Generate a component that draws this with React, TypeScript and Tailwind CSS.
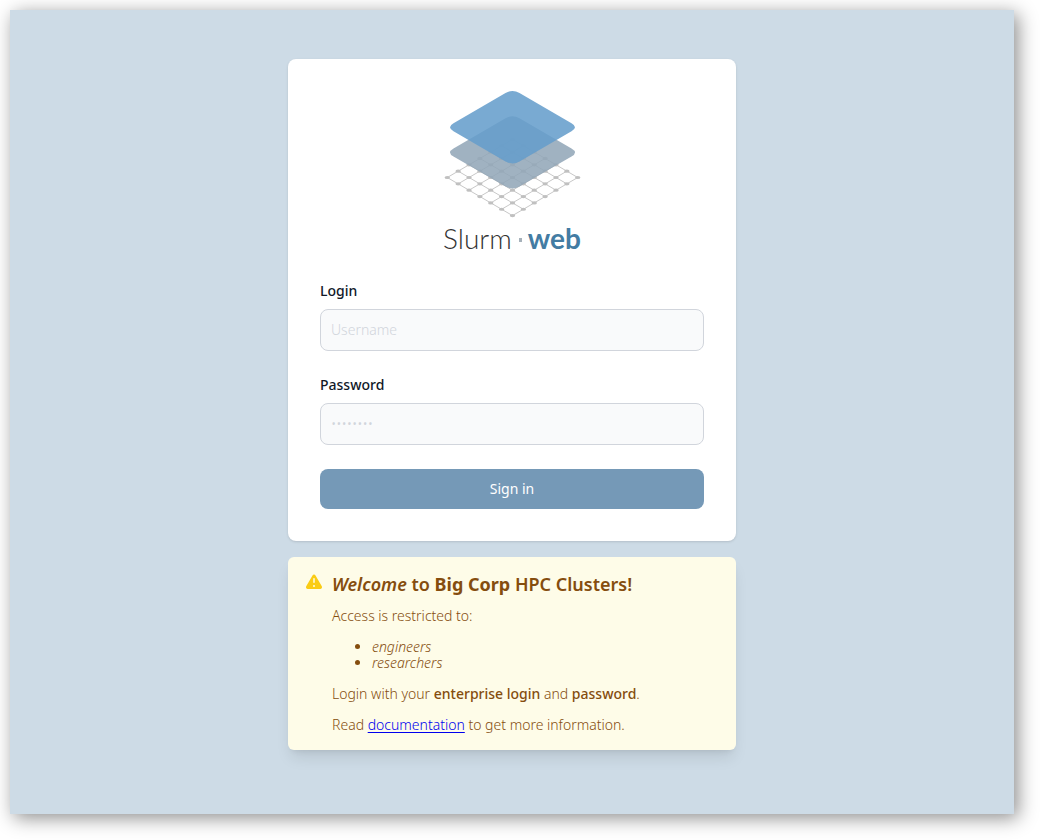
const STEPS = [0, 1, 2, 3, 4, 5, 6];

function nodeAt(column: number, row: number) {
  return {
    x: 68.5 + (column - row) * 10.87,
    y: 48.400 + (column + row) * 6.35,
  };
}

const SHEET =
  "M61.5 2Q68.500 -2 75.500 2L127.500 32.200Q134.500 36.200 127.500 40.200L75.500 70.400Q68.500 74.400 61.500 70.400L9.500 40.200Q2.500 36.200 9.500 32.200Z";

function Logo() {
  return (
    <div className="flex h-[166px] flex-col items-center">
      <svg viewBox="0 0 137 127" className="h-[127px] w-[137px] shrink-0" aria-hidden="true">
        {STEPS.map((step) => {
          const a = nodeAt(step, 0);
          const b = nodeAt(step, 6);
          const c = nodeAt(0, step);
          const d = nodeAt(6, step);
          return (
            <path
              key={step}
              d={`M${a.x} ${a.y}L${b.x} ${b.y}M${c.x} ${c.y}L${d.x} ${d.y}`}
              stroke="#c8c8c8"
              strokeWidth="1"
              fill="none"
            />
          );
        })}
        {STEPS.flatMap((row) =>
          STEPS.map((column) => {
            const node = nodeAt(column, row);
            return (
              <ellipse
                key={`${row}-${column}`}
                cx={node.x}
                cy={node.y}
                rx="2.7"
                ry="1.6"
                fill="#c0c0c0"
              />
            );
          }),
        )}
        <path d={SHEET} transform="translate(0 25.2)" fill="#92a7b8" fillOpacity="0.87" />
        <path d={SHEET} fill="#659dcb" fillOpacity="0.87" />
      </svg>
      <div className="flex items-center font-['Lato',sans-serif] text-[28px] leading-10">
        <span className="font-light text-[#333333]">Slurm</span>
        <span className="mr-1.5 ml-[7px] mt-1 h-1 w-[3px] bg-[#a6b1ba]" />
        <span className="font-bold text-[#437ca3]">web</span>
      </div>
    </div>
  );
}

function Field({ id, label, type, placeholder }: { id: string; label: string; type: string; placeholder: string }) {
  return (
    <div>
      <label htmlFor={id} className="mb-2 block text-sm font-medium text-gray-900">
        {label}
      </label>
      <input
        id={id}
        name={id}
        type={type}
        placeholder={placeholder}
        className="block h-[42px] w-full rounded-lg border border-gray-300 bg-gray-50 px-2.5 pb-0.5 text-sm font-light text-gray-900 placeholder:text-gray-300"
      />
    </div>
  );
}

function WarningIcon() {
  return (
    <svg viewBox="0 0 20 20" fill="#facc15" className="size-5 shrink-0" aria-hidden="true">
      <path
        fillRule="evenodd"
        clipRule="evenodd"
        d="M8.485 2.495c.673-1.167 2.357-1.167 3.03 0l6.280 10.875c.673 1.167-.17 2.625-1.516 2.625H3.720c-1.347 0-2.189-1.458-1.515-2.625L8.485 2.495zM10 5a.75.75 0 01.75.75v3.500a.75.75 0 01-1.500 0v-3.500A.75.75 0 0110 5zm0 9a1 1 0 100-2 1 1 0 000 2z"
      />
    </svg>
  );
}

export default function App() {
  return (
    <div className="flex min-h-screen bg-white pt-2.5 pr-[26px] pb-[26px] pl-2.5 font-['Noto_Sans',sans-serif]">
      <main className="flex flex-1 flex-col items-center gap-4 bg-[#cddbe6] px-4 py-[49px] shadow-[4px_4px_18px_rgba(0,0,0,0.45)]">
        <section className="w-full max-w-md rounded-lg bg-white p-8 shadow">
          <h1>
            <Logo />
          </h1>
          <form className="mt-6 flex flex-col gap-6" onSubmit={(event) => event.preventDefault()}>
            <Field id="login" label="Login" type="text" placeholder="Username" />
            <Field id="password" label="Password" type="password" placeholder="••••••••" />
            <button type="submit" className="h-10 rounded-lg bg-[#7599b7] text-sm text-white">
              Sign in
            </button>
          </form>
        </section>
        <section className="flex w-full max-w-md gap-2 rounded-md bg-[#fefce8] px-4 pt-4 pb-[17px] shadow-lg">
          <WarningIcon />
          <div className="text-sm leading-4 font-light text-[#854d0e]">
            <h2 className="mb-[13px] text-lg leading-[22px] font-semibold">
              <em>Welcome</em> to <strong className="font-bold">Big Corp</strong> HPC Clusters!
            </h2>
            <div className="flex flex-col gap-[15px]">
              <p>Access is restricted to:</p>
              <ul className="list-disc pl-10 italic">
                <li>engineers</li>
                <li>researchers</li>
              </ul>
              <p>
                Login with your <strong className="font-medium">enterprise login</strong> and{" "}
                <strong className="font-medium">password</strong>.
              </p>
              <p>
                Read{" "}
                <a href="#documentation" className="text-[#0000ee] underline underline-offset-2">
                  documentation
                </a>{" "}
                to get more information.
              </p>
            </div>
          </div>
        </section>
      </main>
    </div>
  );
}
